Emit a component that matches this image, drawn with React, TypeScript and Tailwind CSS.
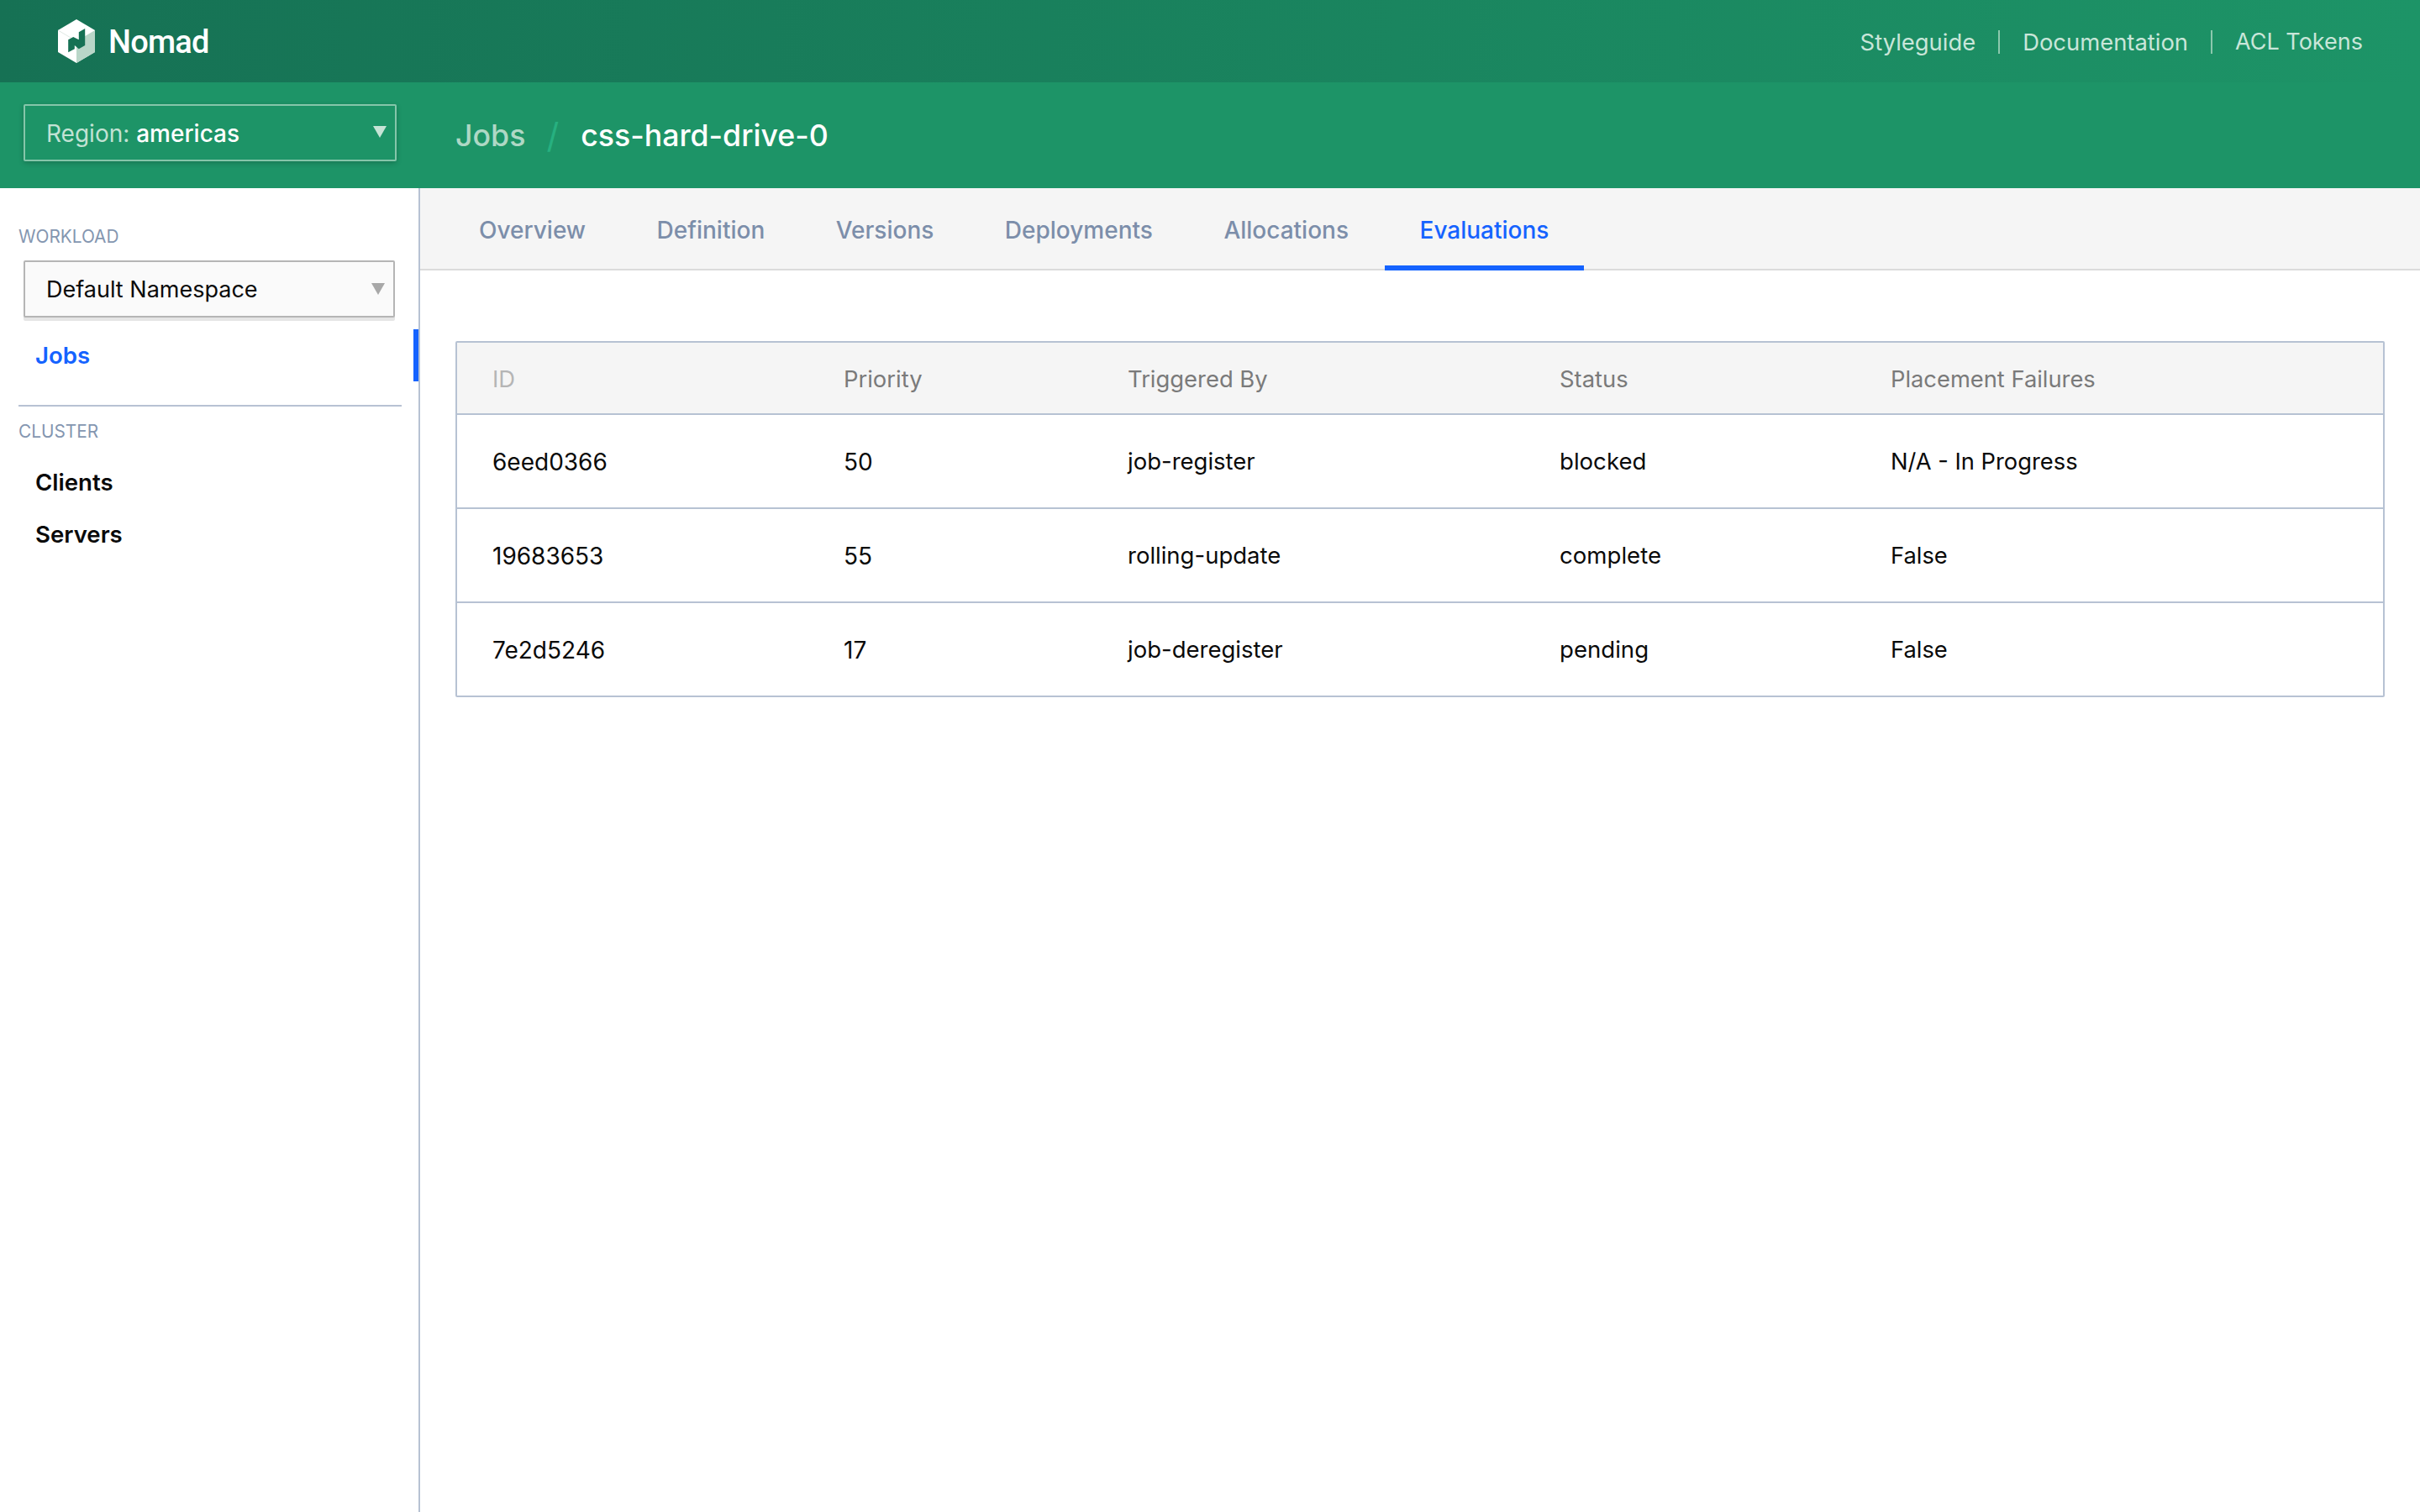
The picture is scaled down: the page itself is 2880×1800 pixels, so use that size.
import React from "react";

const font = { fontFamily: "Inter, 'Noto Sans', sans-serif" };

function Logo() {
  return (
    <svg width="46" height="54" viewBox="0 0 46 54" className="shrink-0">
      <path d="M23 1 L45 14 L45 40 L23 53 L1 40 L1 14 Z" fill="#ffffff" />
      <path d="M45 14 L45 40 L23 53 L23 27 Z" fill="#b9d6c8" />
      <path d="M1 14 L23 27" stroke="#dfe9e4" strokeWidth="1" fill="none" />
      <path d="M13.2 25.3 L19.2 22 L25.8 25.3 L25.8 16.3 L33.2 12 L33.2 32 L25.8 36.3 L20.8 32 L20.8 36.3 L13.2 40.3 Z" fill="#167154" />
    </svg>
  );
}

function Caret({ color }: { color: string }) {
  return (
    <svg width="16" height="14" viewBox="0 0 16 14" className="shrink-0">
      <path d="M0 0 H16 L8 14 Z" fill={color} />
    </svg>
  );
}

const tabs = ["Overview", "Definition", "Versions", "Deployments", "Allocations"];

const rows = [
  ["6eed0366", "50", "job-register", "blocked", "N/A - In Progress"],
  ["19683653", "55", "rolling-update", "complete", "False"],
  ["7e2d5246", "17", "job-deregister", "pending", "False"],
];

const colClasses = [
  "w-[418px]",
  "w-[338px]",
  "w-[514px] text-[27.5px]",
  "w-[394px] text-[27.6px]",
  "flex-1 text-[27.3px]",
];

export default function App() {
  return (
    <div className="w-[2880px] h-[1800px] flex flex-col bg-white overflow-hidden antialiased" style={font}>
      <header className="h-[98px] shrink-0 flex items-center justify-between bg-gradient-to-r from-[#167154] to-[#1d9467] pl-[68px] pr-[68px]">
        <div className="flex items-center gap-[15px]">
          <Logo />
          <span className="pt-[2px] text-white text-[38px] leading-none font-medium tracking-[-0.8px] [font-family:Roboto,sans-serif]">Nomad</span>
        </div>
        <nav className="flex items-center pt-[2px] text-[27.4px] leading-[28px] text-[#c9e6d9]">
          <span>Styleguide</span>
          <span className="w-[2px] h-[28px] bg-[#8cc8ad] mx-[27px]"></span>
          <span>Documentation</span>
          <span className="w-[2px] h-[28px] bg-[#8cc8ad] mx-[27px]"></span>
          <span className="text-[27px]">ACL Tokens</span>
        </nav>
      </header>

      <div className="h-[126px] shrink-0 flex bg-[#1d9467]">
        <div className="w-[500px] shrink-0 pl-[28px] pt-[26px]">
          <div className="w-[444px] h-[68px] flex items-center justify-between pl-[25px] pr-[10px] border-[2px] border-[#85c6aa] rounded-[2px] shadow-[0_2px_6px_rgba(0,0,0,0.2)]">
            <span className="pt-[2px] text-[28px] text-[#c2e2d4]">Region: <span className="text-white font-medium">americas</span></span>
            <span className="mb-[2px]"><Caret color="#c6e4d6" /></span>
          </div>
        </div>
        <div className="flex items-start pl-[42px] pt-[37px] text-[35.7px] leading-[52px] font-medium">
          <span className="text-[#aed8c5]">Jobs</span>
          <span className="text-[#27b080] text-[41px] ml-[25px] mr-[26px] font-normal">/</span>
          <span className="text-white">css-hard-drive-0</span>
        </div>
      </div>

      <div className="flex-1 flex min-h-0">
        <aside className="w-[500px] shrink-0 border-r-[2px] border-[#b7c2d3] relative pt-[44px] pl-[22px]">
          <div className="text-[20.8px] leading-[28px] text-[#8496b0]">WORKLOAD</div>
          <div className="ml-[6px] mt-[14px] w-[442px] h-[68px] flex items-center justify-between pl-[25px] pr-[10px] border-[2px] border-[#b5b5b5] rounded-[2px] bg-[#fafafa] shadow-[0_4px_0_rgba(0,0,0,0.1)]">
            <span className="pt-[2px] text-[27px] text-[#0a0a0a]">Default Namespace</span>
            <Caret color="#a8a8a8" />
          </div>
          <div className="relative mt-[14px] ml-[-22px] w-[498px] h-[62px] flex items-center pl-[42px] pt-[2px]">
            <span className="text-[27.6px] font-semibold text-[#1563ff]">Jobs</span>
            <span className="absolute right-0 top-0 w-[6px] h-[62px] bg-[#1563ff]"></span>
          </div>
          <div className="mt-[28px] w-[456px] h-[2px] bg-[#b7c2d3]"></div>
          <div className="mt-[16px] text-[20.8px] leading-[28px] text-[#8496b0]">CLUSTER</div>
          <div className="mt-[16px] ml-[20px] h-[62px] flex items-center text-[27.6px] font-semibold text-[#0a0a0a]">Clients</div>
          <div className="ml-[20px] h-[62px] flex items-center text-[27.6px] font-semibold text-[#0a0a0a]">Servers</div>
        </aside>

        <main className="flex-1 min-w-0 flex flex-col">
          <div className="h-[98px] shrink-0 flex gap-[0.5px] bg-[#f5f5f5] border-b-[2px] border-[#dbdbdb] pl-[28px] text-[28px] font-medium">
            {tabs.map((t) => (
              <div key={t} className="h-[98px] flex items-center px-[42px] pt-[2px] text-[#7c8eaa]">{t}</div>
            ))}
            <div className="h-[98px] flex items-center px-[42px] pt-[2px] text-[#1563ff] shadow-[inset_0_-6px_0_#1563ff]">Evaluations</div>
          </div>

          <div className="ml-[42px] mr-[42px] mt-[84px] border-[2px] border-[#b7c2d3] rounded-[2px] text-[28px] text-[#0a0a0a]">
            <div className="h-[86px] flex items-center bg-[#f5f5f5] pl-[42px] pt-[4px] text-[27.4px] text-[#7a7a7a] border-b-[2px] border-[#b7c2d3]">
              <div className={`${colClasses[0]} text-[#b5b5b5]`}>ID</div>
              <div className={colClasses[1]}>Priority</div>
              <div className="w-[514px]">Triggered By</div>
              <div className="w-[394px]">Status</div>
              <div className={colClasses[4]}>Placement Failures</div>
            </div>
            {rows.map((r, i) => (
              <div key={r[0]} className={`flex items-center pl-[42px] pt-[2px] ${i < 2 ? "h-[112px] border-b-[2px] border-[#b7c2d3]" : "h-[110px]"}`}>
                {r.map((c, j) => (
                  <div key={j} className={colClasses[j]}>{c}</div>
                ))}
              </div>
            ))}
          </div>
        </main>
      </div>
    </div>
  );
}
